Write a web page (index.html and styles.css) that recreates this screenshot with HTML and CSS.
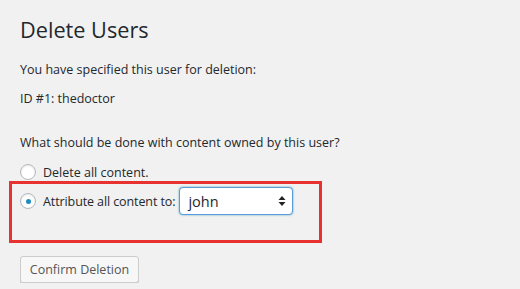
FILE: index.html
```html
<!DOCTYPE html>
<html lang="en">
<head>
    <meta charset="UTF-8">
    <title>Delete Users</title>
    <link rel="stylesheet" href="styles.css">
</head>
<body>
    <div class="wrap">
        <h1>Delete Users</h1>
        <p class="intro">You have specified this user for deletion:</p>
        <p class="user-id">ID #1: thedoctor</p>

        <fieldset class="options">
            <p class="question">What should be done with content owned by this user?</p>
            <label class="option">
                <span class="radio"></span>
                Delete all content.
            </label>
            <div class="highlight">
                <label class="option">
                    <span class="radio checked"></span>
                    Attribute all content to:
                </label>
                <div class="select">
                    <span>john</span>
                    <svg width="8" height="12" viewBox="0 0 8 12"><path d="M4 1 L7.5 5 H0.5 Z M4 11 L0.5 7 H7.5 Z" fill="#222"/></svg>
                </div>
            </div>
        </fieldset>

        <button type="button" class="button">Confirm Deletion</button>
    </div>
</body>
</html>
```

FILE: styles.css
```css
* {
    margin: 0;
    padding: 0;
    box-sizing: border-box;
}

body {
    font-family: 'Open Sans', sans-serif;
    background-color: #f1f1f1;
    color: #23282d;
    font-size: 12.5px;
}

.wrap {
    padding: 15px 0 0 20px;
}

.wrap h1 {
    font-size: 21.7px;
    font-weight: 400;
    line-height: 30px;
    margin-bottom: 16px;
}

.intro, .user-id {
    line-height: 18px;
    margin-bottom: 11px;
}

.options {
    border: none;
    margin-top: 26px;
}

.question {
    line-height: 18px;
    margin-bottom: 11px;
}

.option {
    display: flex;
    align-items: center;
    gap: 7px;
    height: 18px;
}

.radio {
    width: 16px;
    height: 16px;
    border: 1px solid #b4b9be;
    border-radius: 50%;
    background: #fff;
    box-shadow: inset 0 1px 2px rgba(0, 0, 0, 0.1);
    display: flex;
    align-items: center;
    justify-content: center;
}

.radio.checked::after {
    content: "";
    width: 5px;
    height: 5px;
    border-radius: 50%;
    background: #1e8cbe;
}

.highlight {
    margin-left: -11px;
    width: 313px;
    height: 62px;
    border: 3px solid #e8322f;
    padding: 3px 0 0 8px;
    display: flex;
    align-items: flex-start;
    gap: 4px;
}

.highlight .option {
    margin-top: 5px;
    letter-spacing: -0.1px;
}

.select {
    width: 114px;
    height: 28px;
    background: #fff;
    border: 1px solid #5b9dd9;
    border-radius: 4px;
    box-shadow: 0 0 2px rgba(30, 140, 190, 0.8);
    display: flex;
    align-items: center;
    justify-content: space-between;
    padding: 0 6px 0 8px;
    font-size: 14.5px;
}

.button {
    display: block;
    margin-top: 13px;
    width: 119px;
    height: 27px;
    font-family: 'Open Sans', sans-serif;
    font-size: 12.5px;
    color: #555;
    background: #f7f7f7;
    border: 1px solid #ccc;
    border-radius: 3px;
    box-shadow: 0 1px 0 #ccc;
}
```
